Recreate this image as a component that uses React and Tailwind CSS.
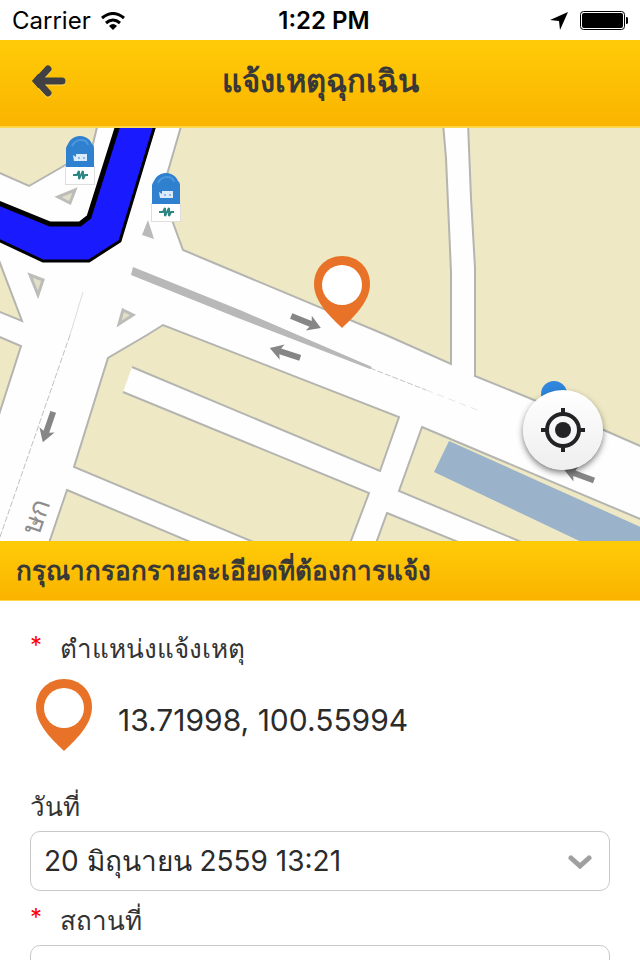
import { useState } from 'react'

function Pin(props) {
  return (
    <svg viewBox="0 0 56 72" aria-hidden="true" {...props}>
      <path
        fill="#e87328"
        d="M28 0C12 0 0 12 0 28C0 44 13 58 28 72C43 58 56 44 56 28C56 12 44 0 28 0Z"
      />
      <circle cx="28" cy="29" r="20" fill="#fff" />
    </svg>
  )
}

// one way arrows, [x, y, rotation]
const arrows = [
  [306, 194, 22],
  [285, 225, 198],
  [48, 299, 109],
  [579, 347, 200]
]

const stations = [
  [66, 8],
  [152, 45]
]

function StreetMap() {
  return (
    <svg viewBox="0 0 640 413" className="block w-full" role="img" aria-label="แผนที่">
      <rect width="640" height="413" fill="#fefefe" />

      {/* city blocks */}
      <g fill="#eee9c4" stroke="#b4b4b0" strokeWidth="2">
        <path d="M-5 -5H98L92 20L62 39L29 58L-5 43Z" />
        <path d="M-5 122L22 193L-5 182Z" />
        <path d="M-5 207L21 218L-5 299Z" />
        <path d="M182 -5L166 50L172 92L183 122L214 135L386 207L451 236V144L446 30L443 -5Z" />
        <path d="M468 -5L471 70L475 140V248L534 272L606 303L645 320V-5Z" />
        <path d="M67 362L200 418H48Z" />
        <path d="M422 299L645 393V418H531L399 363Z" />
        <path d="M387 385L468 418H375Z" />
      </g>
      <path
        fill="#eee9c4"
        d="M163 197L399 289L380 343L132 239L123 264L369 365L349 418H263L74 339L108 230L147 207Z"
      />
      <path
        fill="none"
        stroke="#b4b4b0"
        strokeWidth="2"
        d="M132 239L380 343L399 289L163 197L147 207L108 230L74 339L263 418M123 264L369 365L349 418"
      />

      {/* canal */}
      <path fill="#9ab3ca" d="M449 313L458 317L645 401V418H590L434 344Z" />

      {/* lane lines */}
      <path fill="#b8b8b8" d="M133 139L240 182L372 239L370 241L300 214L238 190L131 147Z" />
      <path stroke="#c4c4c4" strokeDasharray="6 2" d="M370 240L426 262" />
      <path stroke="#e6e6e6" strokeDasharray="7 5" d="M426 262L480 283" />
      <path stroke="#dddddd" d="M83 164L70 207" />
      <path stroke="#c0c0c0" strokeDasharray="6 2" d="M70 207L0 409" />

      {/* traffic islands */}
      <g fill="#e2dfc8" stroke="#bcbcb8" strokeWidth="3">
        <path d="M58 69L75 62L70 75Z" />
        <path d="M30 147L43 152L38 167Z" />
        <path d="M123 182L133 187L119 196Z" />
      </g>
      <path fill="#bababa" d="M148 92L142 107L154 111Z" />

      {/* highlighted road */}
      <path
        fill="#1a1aff"
        d="M117 -2L88 90L80 95H50L-4 73V112L43 132H89L120 112L156 -2Z"
      />
      <path fill="none" stroke="#000" strokeWidth="5" d="M118 -3L89 89L80 96H50L-4 74" />
      <path fill="none" stroke="#000" strokeWidth="3" d="M-4 111L43 133H89L120 113L155 -3" />

      {arrows.map(([x, y, angle]) => (
        <path
          key={`${x}-${y}`}
          transform={`translate(${x} ${y}) rotate(${angle})`}
          fill="#868686"
          d="M-16 -3H5L3 -8L16 0L3 8L5 3H-16Z"
        />
      ))}

      {/* MRT stations */}
      <circle cx="554" cy="266" r="13" fill="#2f86dc" />
      {stations.map(([x, y]) => (
        <g key={x} transform={`translate(${x} ${y})`}>
          <rect x="-1" y="30" width="30" height="19" fill="#dedede" />
          <path fill="#2f80cf" d="M0 31V12Q1 9 2 8Q4 3 9 1Q14 -1 19 1Q24 3 26 8Q28 9 28 12V31Z" />
          <path fill="none" stroke="#4d97dc" strokeWidth="2" d="M6 10Q9 4 15 4T22 9" />
          <path fill="#dcebfa" d="M7 19L10 21V18H21V25H8Z" />
          <path fill="#8bbbe8" d="M12 21H14V23H12ZM17 21H19V23H17Z" />
          <rect y="31" width="28" height="17" fill="#fff" />
          <path fill="none" stroke="#2c8784" strokeWidth="2" d="M7 39H11L13 35V43L17 35V43L19 39H22" />
        </g>
      ))}

      <text
        transform="translate(39 408) rotate(-71)"
        fontSize="28"
        fill="#8d8d8d"
      >
        ษก
      </text>

      <Pin x="314" y="128" width="56" height="72" />
    </svg>
  )
}

function StatusBar() {
  return (
    <div className="grid h-10 grid-cols-3 items-center bg-white px-3 pt-px text-2xl text-black">
      <div className="flex items-center gap-2.5">
        <span>Carrier</span>
        <svg viewBox="0 0 24 18" className="h-[18px] w-6" aria-hidden="true">
          <g fill="none" stroke="#000" strokeWidth="3">
            <path d="M1 6Q12 -3 23 6" />
            <path d="M5 11Q12 5 19 11" />
          </g>
          <path d="M8 14Q12 10 16 14L12 18Z" />
        </svg>
      </div>
      <div className="pl-2 text-center font-semibold">1:22 PM</div>
      <div className="flex items-center justify-end gap-3">
        <svg viewBox="0 0 18 18" className="h-[18px] w-[18px]" aria-hidden="true">
          <path d="M18 0L10 18L9 9L0 8Z" />
        </svg>
        <svg viewBox="0 0 48 19" className="h-[19px] w-12" aria-hidden="true">
          <rect x="0.500" y="0.500" width="44" height="18" rx="3" fill="#fff" stroke="#000" />
          <rect x="2" y="2" width="41" height="15" rx="2" />
          <path d="M46 6Q49 6 49 9.500Q49 13 46 13Z" />
        </svg>
      </div>
    </div>
  )
}

function FieldLabel({ htmlFor, required, children }) {
  return (
    <label htmlFor={htmlFor} className="flex h-[54px] items-center pt-1 text-[26px] text-[#333333]">
      {required && <span className="w-[30px] pb-1 text-2xl text-[#ff0000]">*</span>}
      <span>{children}</span>
    </label>
  )
}

export default function App() {
  const [date, setDate] = useState('20 มิถุนายน 2559 13:21')
  const [place, setPlace] = useState('')

  return (
    <div className='min-h-screen bg-white font-[Inter,"Noto_Sans",sans-serif]'>
      <StatusBar />

      <header className="grid h-[88px] grid-cols-[98px_1fr_98px] items-center border-b-2 border-[#ffd84a] bg-linear-to-b from-[#ffcb08] to-[#fab400] pb-1">
        <button type="button" aria-label="กลับ" className="flex justify-center">
          <svg viewBox="0 0 34 33" className="h-[33px] w-[34px]" aria-hidden="true">
            <g strokeWidth="7" strokeLinecap="round">
              <path fill="none" stroke="#ffdc62" d="M16 5L5 17L16 29M6 17H30" />
              <path fill="none" stroke="#414042" d="M16 4L5 16L16 28M6 16H30" />
              <path fill="#414042" d="M0 16L6 9H13V23H6Z" />
            </g>
          </svg>
        </button>
        <h1 className="text-center text-[31px] font-semibold text-[#383838]">แจ้งเหตุฉุกเฉิน</h1>
      </header>

      <div className="relative">
        <StreetMap />
        <button
          type="button"
          aria-label="ตำแหน่งของฉัน"
          className="absolute right-[37px] bottom-[71px] flex size-20 items-center justify-center rounded-full bg-linear-to-b from-white to-[#eeeeee] shadow-[0_3px_6px_rgba(0,0,0,0.5)]"
        >
          <svg viewBox="0 0 44 44" className="size-11" aria-hidden="true">
            <circle cx="22" cy="22" r="16" fill="none" stroke="#232326" strokeWidth="4" />
            <circle cx="22" cy="22" r="8" fill="#232326" />
            <path stroke="#232326" strokeWidth="4" d="M22 0V6M22 38V44M0 22H6M38 22H44" />
          </svg>
        </button>
      </div>

      <h2 className="flex h-[60px] items-center border-b border-[#ffd84a] bg-linear-to-b from-[#ffcb08] to-[#fab400] px-4 text-[26px] font-semibold text-[#383838]">
        กรุณากรอกรายละเอียดที่ต้องการแจ้ง
      </h2>

      <form className="px-[30px] pt-[18px]">
        <FieldLabel htmlFor="position" required>ตำแหน่งแจ้งเหตุ</FieldLabel>
        <div className="mt-[6px] mb-[26px] flex items-center gap-[26px] pl-[6px] text-[30px] text-[#2b2b2b]">
          <Pin className="h-[72px] w-14" />
          <output id="position" className="pt-2.5">13.71998, 100.55994</output>
        </div>

        <FieldLabel htmlFor="date">วันที่</FieldLabel>
        <div className="relative">
          <select
            id="date"
            value={date}
            onChange={(e) => setDate(e.target.value)}
            className="h-[60px] w-full appearance-none rounded-[10px] border border-[#c8c8c8] bg-white px-[13px] text-[28px] text-[#2b2b2b]"
          >
            <option>20 มิถุนายน 2559 13:21</option>
          </select>
          <svg
            viewBox="0 0 24 14"
            className="pointer-events-none absolute top-6 right-[18px] h-[14px] w-6"
            aria-hidden="true"
          >
            <path
              fill="none"
              stroke="#a0a0a0"
              strokeWidth="5"
              strokeLinecap="round"
              d="M3 3L12 11L21 3"
            />
          </svg>
        </div>

        <FieldLabel htmlFor="place" required>สถานที่</FieldLabel>
        <input
          id="place"
          type="text"
          value={place}
          onChange={(e) => setPlace(e.target.value)}
          className="h-[60px] w-full rounded-[10px] border border-[#c8c8c8] bg-white px-[13px] text-[28px] text-[#2b2b2b]"
        />
      </form>
    </div>
  )
}
